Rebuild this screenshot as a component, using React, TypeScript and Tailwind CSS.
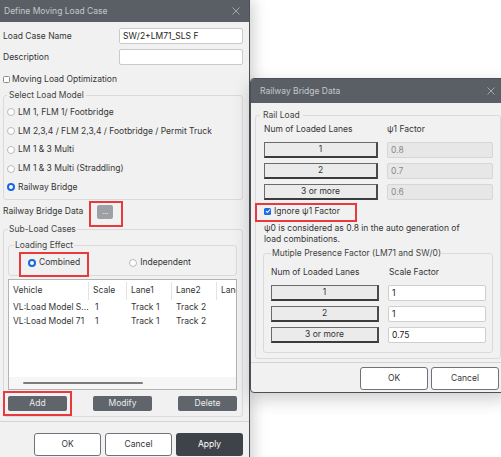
import React from "react";

function CloseIcon() {
  return (
    <svg width="8" height="8" viewBox="0 0 8 8" className="shrink-0">
      <path d="M0.5 0.5 L7.5 7.5 M7.5 0.5 L0.5 7.5" stroke="#a3a8ae" strokeWidth="1" fill="none" />
    </svg>
  );
}

function Radio({ checked, label }: { checked?: boolean; label: string }) {
  return (
    <span className="relative inline-flex items-center gap-[3px]">
      {checked ? (
        <span className="h-[8px] w-[8px] shrink-0 rounded-full border-[2.5px] border-[#1565e6] bg-white" />
      ) : (
        <span className="h-[8px] w-[8px] shrink-0 rounded-full border border-[#b9b9b9] bg-white" />
      )}
      <span>{label}</span>
    </span>
  );
}

function Check({ checked }: { checked?: boolean }) {
  if (checked) {
    return (
      <span className="flex h-[7px] w-[7px] shrink-0 items-center justify-center rounded-[1.5px] bg-[#1f6ae0]">
        <svg width="6" height="6" viewBox="0 0 6 6">
          <path d="M1 3.1 L2.4 4.5 L5 1.5" stroke="#fff" strokeWidth="1.1" fill="none" />
        </svg>
      </span>
    );
  }
  return <span className="h-[7px] w-[7px] shrink-0 rounded-[1.5px] border border-[#8a8a8a] bg-white" />;
}

function RedMark({ className }: { className: string }) {
  return <span className={`pointer-events-none absolute border-2 border-[#e8393c] ${className}`} />;
}

function DarkButton({ label }: { label: string }) {
  return (
    <div className="flex h-[15px] w-[59px] items-center justify-center rounded-[2px] bg-[#60656c] text-[#e9ebee]">
      {label}
    </div>
  );
}

function LaneButton({ label, width }: { label: string; width: string }) {
  return (
    <div
      className={`flex h-[16px] ${width} shrink-0 items-center justify-center border border-[#6a6a6a] border-b-2 border-r-2 border-b-[#3c3c3c] border-r-[#4a4a4a] bg-[#ebebeb] text-[#333]`}
    >
      {label}
    </div>
  );
}

function Field({ value, disabled, width }: { value: string; disabled?: boolean; width: string }) {
  return (
    <div
      className={`flex h-[16px] ${width} items-center rounded-[2px] border px-[3px] ${
        disabled ? "border-[#d6d6d6] bg-[#e7e7e7] text-[#8a8a8a]" : "border-[#cfcfcf] bg-white text-[#222]"
      }`}
    >
      {value}
    </div>
  );
}

function MovingLoadDialog() {
  const models = [
    "LM 1, FLM 1/ Footbridge",
    "LM 2,3,4 / FLM 2,3,4 / Footbridge / Permit Truck",
    "LM 1 & 3 Multi",
    "LM 1 & 3 Multi (Straddling)",
  ];
  const rows = [
    ["VL:Load Model S...", "1", "Track 1", "Track 2"],
    ["VL:Load Model 71", "1", "Track 1", "Track 2"],
  ];

  return (
    <div className="absolute left-0 top-0 h-[480px] w-[250px] border-r border-[#4b5057] bg-[#f1f1f1] shadow-[3px_0_14px_rgba(0,0,0,0.2)]">
      <div className="flex h-[22px] items-center justify-between bg-[#5a5f66] pl-[4px] pr-[9px] text-[#c3c7cc]">
        <span>Define Moving Load Case</span>
        <CloseIcon />
      </div>

      <div className="flex flex-col pl-[3px] pr-[6px]">
        <div className="mt-[6px] flex h-[16px] items-center justify-between">
          <span>Load Case Name</span>
          <div className="flex h-full w-[124px] items-center rounded-[2px] border border-[#cacaca] bg-white px-[3px] text-[#222]">
            SW/2+LM71_SLS F
          </div>
        </div>
        <div className="mt-[5px] flex h-[16px] items-center justify-between">
          <span>Description</span>
          <div className="h-full w-[124px] rounded-[2px] border border-[#cacaca] bg-white" />
        </div>
        <div className="mt-[8px] flex h-[12px] items-center gap-[2px]">
          <Check />
          <span>Moving Load Optimization</span>
        </div>

        <fieldset className="mt-[5px] min-w-0 rounded-[3px] border border-[#dadada] pb-[2px] pl-[3px]">
          <legend className="px-[2px] leading-[11px] text-[#444]">Select Load Model</legend>
          <div className="flex flex-col pt-[2px]">
            {models.map((m) => (
              <div key={m} className="flex h-[18.75px] items-center">
                <Radio label={m} />
              </div>
            ))}
            <div className="flex h-[18.75px] items-center">
              <Radio checked label="Railway Bridge" />
            </div>
          </div>
        </fieldset>

        <div className="mt-[2px] flex h-[20px] items-center">
          <span>Railway Bridge Data</span>
          <span className="relative ml-[14px] flex h-[14px] w-[16px] items-center justify-center rounded-[2px] bg-[#9da1a6] text-[7px] leading-none text-white">
            ...
            <RedMark className="-bottom-[8px] -left-[8px] -right-[10px] -top-[4px]" />
          </span>
        </div>

        <fieldset className="mt-[2px] min-w-0 rounded-[3px] border border-[#dadada] pb-[5px] pl-[4px] pr-[5px]">
          <legend className="px-[1px] leading-[11px] text-[#444]">Sub-Load Cases</legend>

          <fieldset className="mt-[5px] min-w-0 rounded-[3px] border border-[#dadada] pb-[2px] pl-[5px]">
            <legend className="px-[1px] leading-[11px] text-[#444]">Loading Effect</legend>
            <div className="mt-[3px] flex h-[19px] items-center">
              <span className="relative ml-[14px]">
                <Radio checked label="Combined" />
                <RedMark className="-bottom-[7px] -left-[9px] -right-[9px] -top-[5px]" />
              </span>
              <span className="ml-[49px]">
                <Radio label="Independent" />
              </span>
            </div>
          </fieldset>

          <div className="mt-[3px] flex h-[111px] min-w-0 flex-col overflow-hidden border border-[#b4b4b4] bg-white">
            <div className="mt-[2px] grid h-[18px] grid-cols-[80px_38px_45px_45px_60px] items-center">
              {["Vehicle", "Scale", "Lane1", "Lane2", "Lane3"].map((h, i) => (
                <div
                  key={h}
                  className={`flex h-full items-center whitespace-nowrap pl-[4px] ${i < 4 ? "border-r border-[#e3e3e3]" : ""}`}
                >
                  {h}
                </div>
              ))}
            </div>
            <div className="flex flex-col pt-[1px]">
              {rows.map((r) => (
                <div key={r[0]} className="grid h-[13.5px] grid-cols-[80px_38px_45px_45px_60px] items-center">
                  <div className="whitespace-nowrap pl-[4px]">{r[0]}</div>
                  <div className="pl-[6px]">{r[1]}</div>
                  <div className="pl-[4px]">{r[2]}</div>
                  <div className="pl-[4px]">{r[3]}</div>
                  <div />
                </div>
              ))}
            </div>
            <div className="mt-auto flex h-[12px] shrink-0 items-center bg-[#f6f6f6] pl-[14px]">
              <div className="h-[2px] w-[120px] rounded-full bg-[#7c7c7c]" />
            </div>
          </div>

          <div className="mt-[6px] flex items-center justify-between">
            <span className="relative">
              <DarkButton label="Add" />
              <RedMark className="-bottom-[5px] -left-[5px] -right-[5px] -top-[5px]" />
            </span>
            <DarkButton label="Modify" />
            <DarkButton label="Delete" />
          </div>
        </fieldset>
      </div>

      <div className="mt-[4px] flex justify-end gap-[4px] border-t border-[#d4d4d4] pr-[6px] pt-[11px]">
        <div className="flex h-[23px] w-[67px] items-center justify-center rounded-[3px] border border-[#6f7379] bg-white">OK</div>
        <div className="flex h-[23px] w-[67px] items-center justify-center rounded-[3px] border border-[#6f7379] bg-white">Cancel</div>
        <div className="flex h-[23px] w-[67px] items-center justify-center rounded-[3px] bg-[#3e434a] text-white">Apply</div>
      </div>
    </div>
  );
}

function RailwayDialog() {
  const rail = [
    ["1", "0.8"],
    ["2", "0.7"],
    ["3 or more", "0.6"],
  ];
  const presence = [
    ["1", "1"],
    ["2", "1"],
    ["3 or more", "0.75"],
  ];

  return (
    <div className="absolute left-[250px] top-[78px] h-[315px] w-[258px] overflow-hidden rounded-[4px] border border-[#4b5057] bg-[#f1f1f1] shadow-[0_6px_18px_rgba(0,0,0,0.2)]">
      <div className="flex h-[24px] items-center justify-between bg-[#5a5f66] pl-[9px] pr-[9px] text-[#c3c7cc]">
        <span>Railway Bridge Data</span>
        <span className="mr-[3px]">
          <CloseIcon />
        </span>
      </div>

      <fieldset className="ml-[4px] mr-[6px] mt-[7px] min-w-0 rounded-[3px] border border-[#dadada] pb-[5px] pl-[4px]">
        <legend className="px-[3px] leading-[11px] text-[#444]">Rail Load</legend>
        <div className="flex flex-col pl-[4px]">
          <div className="flex h-[12px] items-center pt-[5px]">
            <span className="w-[123px]">Num of Loaded Lanes</span>
            <span>ψ1 Factor</span>
          </div>
          <div className="mt-[9px] flex flex-col gap-[5px]">
            {rail.map(([l, v]) => (
              <div key={l} className="flex items-center gap-[9px]">
                <LaneButton label={l} width="w-[114px]" />
                <Field value={v} disabled width="w-[106px]" />
              </div>
            ))}
          </div>

          <div className="mt-[5px] flex h-[12px] items-center">
            <span className="relative flex items-center gap-[3px]">
              <Check checked />
              <span>Ignore ψ1 Factor</span>
              <RedMark className="-bottom-[5px] -left-[9px] -right-[17px] -top-[3px]" />
            </span>
          </div>

          <p className="mt-[6px] pr-[10px] leading-[11px]">
            ψ0 is considered as 0.8 in the auto generation of
            <br />
            load combinations.
          </p>

          <fieldset className="-ml-[1px] mt-[3px] w-[230px] min-w-0 rounded-[3px] border border-[#dadada] pb-[9px] pl-[7px]">
            <legend className="px-[1px] leading-[11px] text-[#444]">Mutiple Presence Factor (LM71 and SW/0)</legend>
            <div className="mt-[5px] flex h-[14px] items-center pt-[3px]">
              <span className="w-[118px]">Num of Loaded Lanes</span>
              <span>Scale Factor</span>
            </div>
            <div className="mt-[7px] flex flex-col gap-[5px]">
              {presence.map(([l, v]) => (
                <div key={l} className="flex items-center gap-[9px]">
                  <LaneButton label={l} width="w-[108px]" />
                  <Field value={v} width="w-[98px]" />
                </div>
              ))}
            </div>
          </fieldset>
        </div>
      </fieldset>

      <div className="mt-[3px] flex gap-[3px] border-t border-[#d4d4d4] pl-[109px] pt-[4px]">
        <div className="flex h-[23px] w-[68px] items-center justify-center rounded-[3px] border border-[#6f7379] bg-white">OK</div>
        <div className="flex h-[23px] w-[68px] items-center justify-center rounded-[3px] border border-[#6f7379] bg-white">Cancel</div>
      </div>
    </div>
  );
}

export default function App() {
  return (
    <div className="relative h-[457px] w-[501px] overflow-hidden bg-white font-[Inter,'Noto_Sans',sans-serif] text-[8.5px] leading-[11px] text-[#353535]">
      <MovingLoadDialog />
      <RailwayDialog />
    </div>
  );
}
